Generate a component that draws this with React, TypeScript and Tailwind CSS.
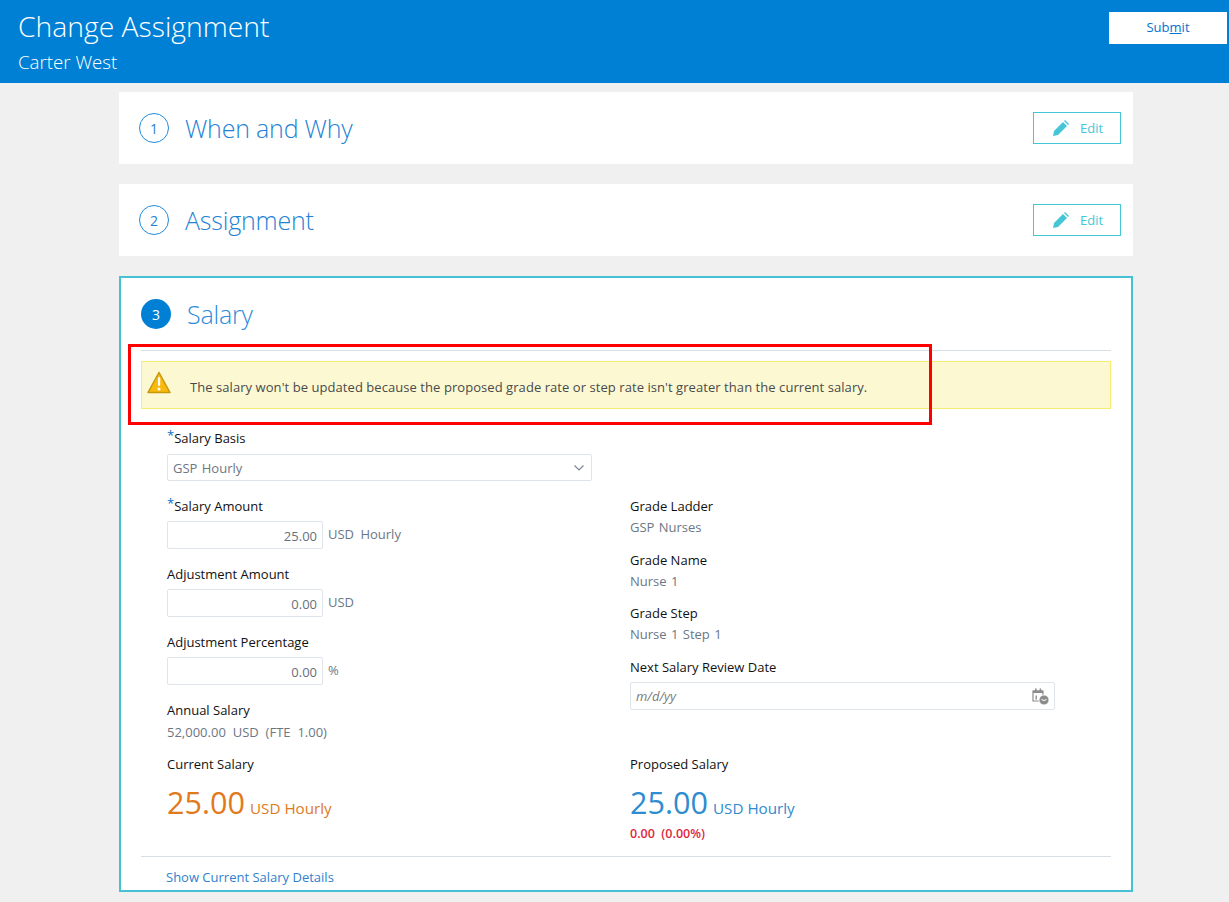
const font = "font-['Open_Sans',sans-serif]"

function PencilIcon() {
    return (
        <svg width="17" height="17" viewBox="0 0 17 17" fill="#45c6d6">
            <path d="M1 16l1-5L11 2l4 4-9 9z" />
            <path d="M12 1l1-1 4 4-1 1z" />
        </svg>
    )
}

function WarningIcon() {
    return (
        <svg width="24" height="23" viewBox="0 0 24 23">
            <path d="M12 1.5L23 21.5H1z" fill="#f8bb0c" stroke="#c8960a" strokeWidth="1.5" strokeLinejoin="round" />
            <rect x="11" y="6" width="2.2" height="9" rx="1" fill="#fff" />
            <circle cx="12" cy="18" r="1.5" fill="#fff" />
        </svg>
    )
}

function CalendarIcon() {
    return (
        <svg width="17" height="17" viewBox="0 0 17 17">
            <path d="M1 3h10v10H1z" fill="none" stroke="#8c8c8c" strokeWidth="1.2" />
            <path d="M1 2.5h10v2.5H1zM3 0.5h1.6v2H3zM7.6 0.5h1.6v2H7.6z" fill="#8c8c8c" />
            <path d="M3.5 7.5h1.4v4H3.5z" fill="#8c8c8c" />
            <circle cx="12" cy="12" r="5" fill="#8c8c8c" stroke="#fff" strokeWidth="0.8" />
            <path d="M9.5 11.5l2.5 1 2.5-1" stroke="#fff" fill="none" />
        </svg>
    )
}

function EditButton() {
    return (
        <button className="flex items-center justify-center gap-[11px] w-[88px] h-[32px] pl-[1px] border border-[#45c6d6] text-[#45c6d6] text-[13px]">
            <PencilIcon />
            <span className="pt-[2px]">Edit</span>
        </button>
    )
}

function CollapsedStep({ num, title }: { num: string; title: string }) {
    return (
        <div className="flex items-center justify-between h-[72px] bg-white pl-[20px] pr-[12px]">
            <div className="flex items-center">
                <div className="flex items-center justify-center w-[30px] h-[30px] rounded-full border border-[#1f8ad8] text-[#1f82d4] text-[14px]">{num}</div>
                <div className="ml-[16px] pt-[2px] text-[25px] font-light text-[#1f82d4] tracking-[-0.2px]">{title}</div>
            </div>
            <EditButton />
        </div>
    )
}

function Label({ text, req }: { text: string; req?: boolean }) {
    return (
        <div className="h-[20px] leading-[20px] text-[13px] text-[#111] whitespace-nowrap">
            {req && <span className="text-[#0572ce] relative top-[-3px]">*</span>}
            {text}
        </div>
    )
}

function AmountInput({ value, unit }: { value: string; unit: string }) {
    return (
        <div className="flex items-center mt-[5px] h-[28px]">
            <div className="w-[156px] h-[28px] leading-[28px] border border-[#dfe4ea] rounded-[2px] text-right pr-[5px] text-[13px] text-[#666f7a]">{value}</div>
            <span className="ml-[5px] text-[13px] text-[#6b7785] [word-spacing:3px]">{unit}</span>
        </div>
    )
}

function Value({ text }: { text: string }) {
    return <div className="h-[20px] leading-[20px] mt-[1px] text-[13px] text-[#6b7785] [word-spacing:1px]">{text}</div>
}

function BigAmount({ color }: { color: string }) {
    return (
        <div className={`flex items-baseline mt-[5px] ${color}`}>
            <span className="text-[30.6px] leading-[46px]">25.00</span>
            <span className="ml-[5px] text-[15.2px]">USD Hourly</span>
        </div>
    )
}

export default function App() {
    return (
        <div className={`${font} relative min-h-[902px] bg-[#f0f0f0] pb-[10px]`}>
            <div className="relative flex justify-between h-[83px] bg-[#0080d5] text-white">
                <div className="pl-[18px]">
                    <div className="pt-[6px] h-[46px] text-[28.3px] leading-[40px] font-light">Change Assignment</div>
                    <div className="mt-[4px] text-[18.7px] leading-[24px] font-light">Carter West</div>
                </div>
                <button className="mt-[12px] mr-[2px] w-[118px] h-[32px] bg-white text-[13px] text-[#0572ce]">
                    Sub<span className="underline">m</span>it
                </button>
            </div>

            <div className="mx-[119px] mt-[9px] w-[1014px]">
                <CollapsedStep num="1" title="When and Why" />
                <div className="h-[20px]" />
                <CollapsedStep num="2" title="Assignment" />

                <div className="mt-[20px] h-[616px] bg-white border-2 border-[#45c1d3] px-[20px]">
                    <div className="flex items-center h-[73px] border-b border-[#d6dfe6]">
                        <div className="flex items-center justify-center w-[30px] h-[30px] rounded-full bg-[#0080d5] text-white text-[14px]">3</div>
                        <div className="ml-[16px] pt-[2px] text-[25px] font-light text-[#2b8bd8] tracking-[-0.2px]">Salary</div>
                    </div>

                    <div className="flex items-center mt-[10px] h-[48px] bg-[#fcf9d2] border border-[#f5ec70] pl-[5px]">
                        <div className="mb-[5px]"><WarningIcon /></div>
                        <span className="ml-[19px] pt-[6px] text-[13px] text-[#4a4a4a] tracking-[0.06px]">The salary won't be updated because the proposed grade rate or step rate isn't greater than the current salary.</span>
                    </div>

                    <div className="grid grid-cols-[463px_1fr] pl-[26px] pt-[19px]">
                        <div>
                            <Label text="Salary Basis" req />
                            <div className="flex items-center justify-between w-[425px] h-[27px] mt-[6px] border border-[#dfe4ea] rounded-[2px] pl-[5px] pr-[6px] text-[13px] text-[#6b7785]">
                                <span className="pt-[2px] [word-spacing:1px]">GSP Hourly</span>
                                <svg width="12" height="8" viewBox="0 0 12 8" fill="none" stroke="#7d8894" strokeWidth="1.2"><path d="M1.5 1.5L6 6l4.5-4.5" /></svg>
                            </div>
                            <div className="mt-[15px]"><Label text="Salary Amount" req /></div>
                            <AmountInput value="25.00" unit="USD Hourly" />
                            <div className="mt-[15px]"><Label text="Adjustment Amount" /></div>
                            <AmountInput value="0.00" unit="USD" />
                            <div className="mt-[15px]"><Label text="Adjustment Percentage" /></div>
                            <AmountInput value="0.00" unit="%" />
                            <div className="mt-[15px]"><Label text="Annual Salary" /></div>
                            <div className="h-[20px] leading-[20px] mt-[2px] text-[13px] text-[#6b7785] [word-spacing:3.5px]">52,000.00 USD (FTE 1.00)</div>
                        </div>
                        <div className="pt-[68px]">
                            <Label text="Grade Ladder" />
                            <Value text="GSP Nurses" />
                            <div className="mt-[13px]"><Label text="Grade Name" /></div>
                            <Value text="Nurse 1" />
                            <div className="mt-[12px]"><Label text="Grade Step" /></div>
                            <Value text="Nurse 1 Step 1" />
                            <div className="mt-[13px]"><Label text="Next Salary Review Date" /></div>
                            <div className="flex items-center justify-between w-[425px] h-[28px] mt-[5px] border border-[#dfe4ea] rounded-[2px] pl-[5px] pr-[5px] text-[13px] italic text-[#7a7a7a]">
                                <span className="pt-[2px]">m/d/yy</span>
                                <CalendarIcon />
                            </div>
                        </div>
                    </div>

                    <div className="grid grid-cols-[463px_1fr] pl-[26px] mt-[12px] h-[102px]">
                        <div>
                            <Label text="Current Salary" />
                            <BigAmount color="text-[#e07a1c]" />
                        </div>
                        <div>
                            <Label text="Proposed Salary" />
                            <BigAmount color="text-[#2e8ccf]" />
                            <div className="mt-[1px] text-[12.5px] leading-[16px] font-semibold text-[#e0283c]">0.00&nbsp; (0.00%)</div>
                        </div>
                    </div>

                    <div className="border-t border-[#d6dfe6] pl-[25px] pt-[10px] text-[13px] leading-[20px] text-[#2f7fd0]">Show Current Salary Details</div>
                </div>
            </div>

            {/* annotation on top of the screenshot */}
            <div className="absolute left-[128px] top-[344px] w-[804px] h-[81px] border-[3px] border-[#ff0000]" />
        </div>
    )
}
